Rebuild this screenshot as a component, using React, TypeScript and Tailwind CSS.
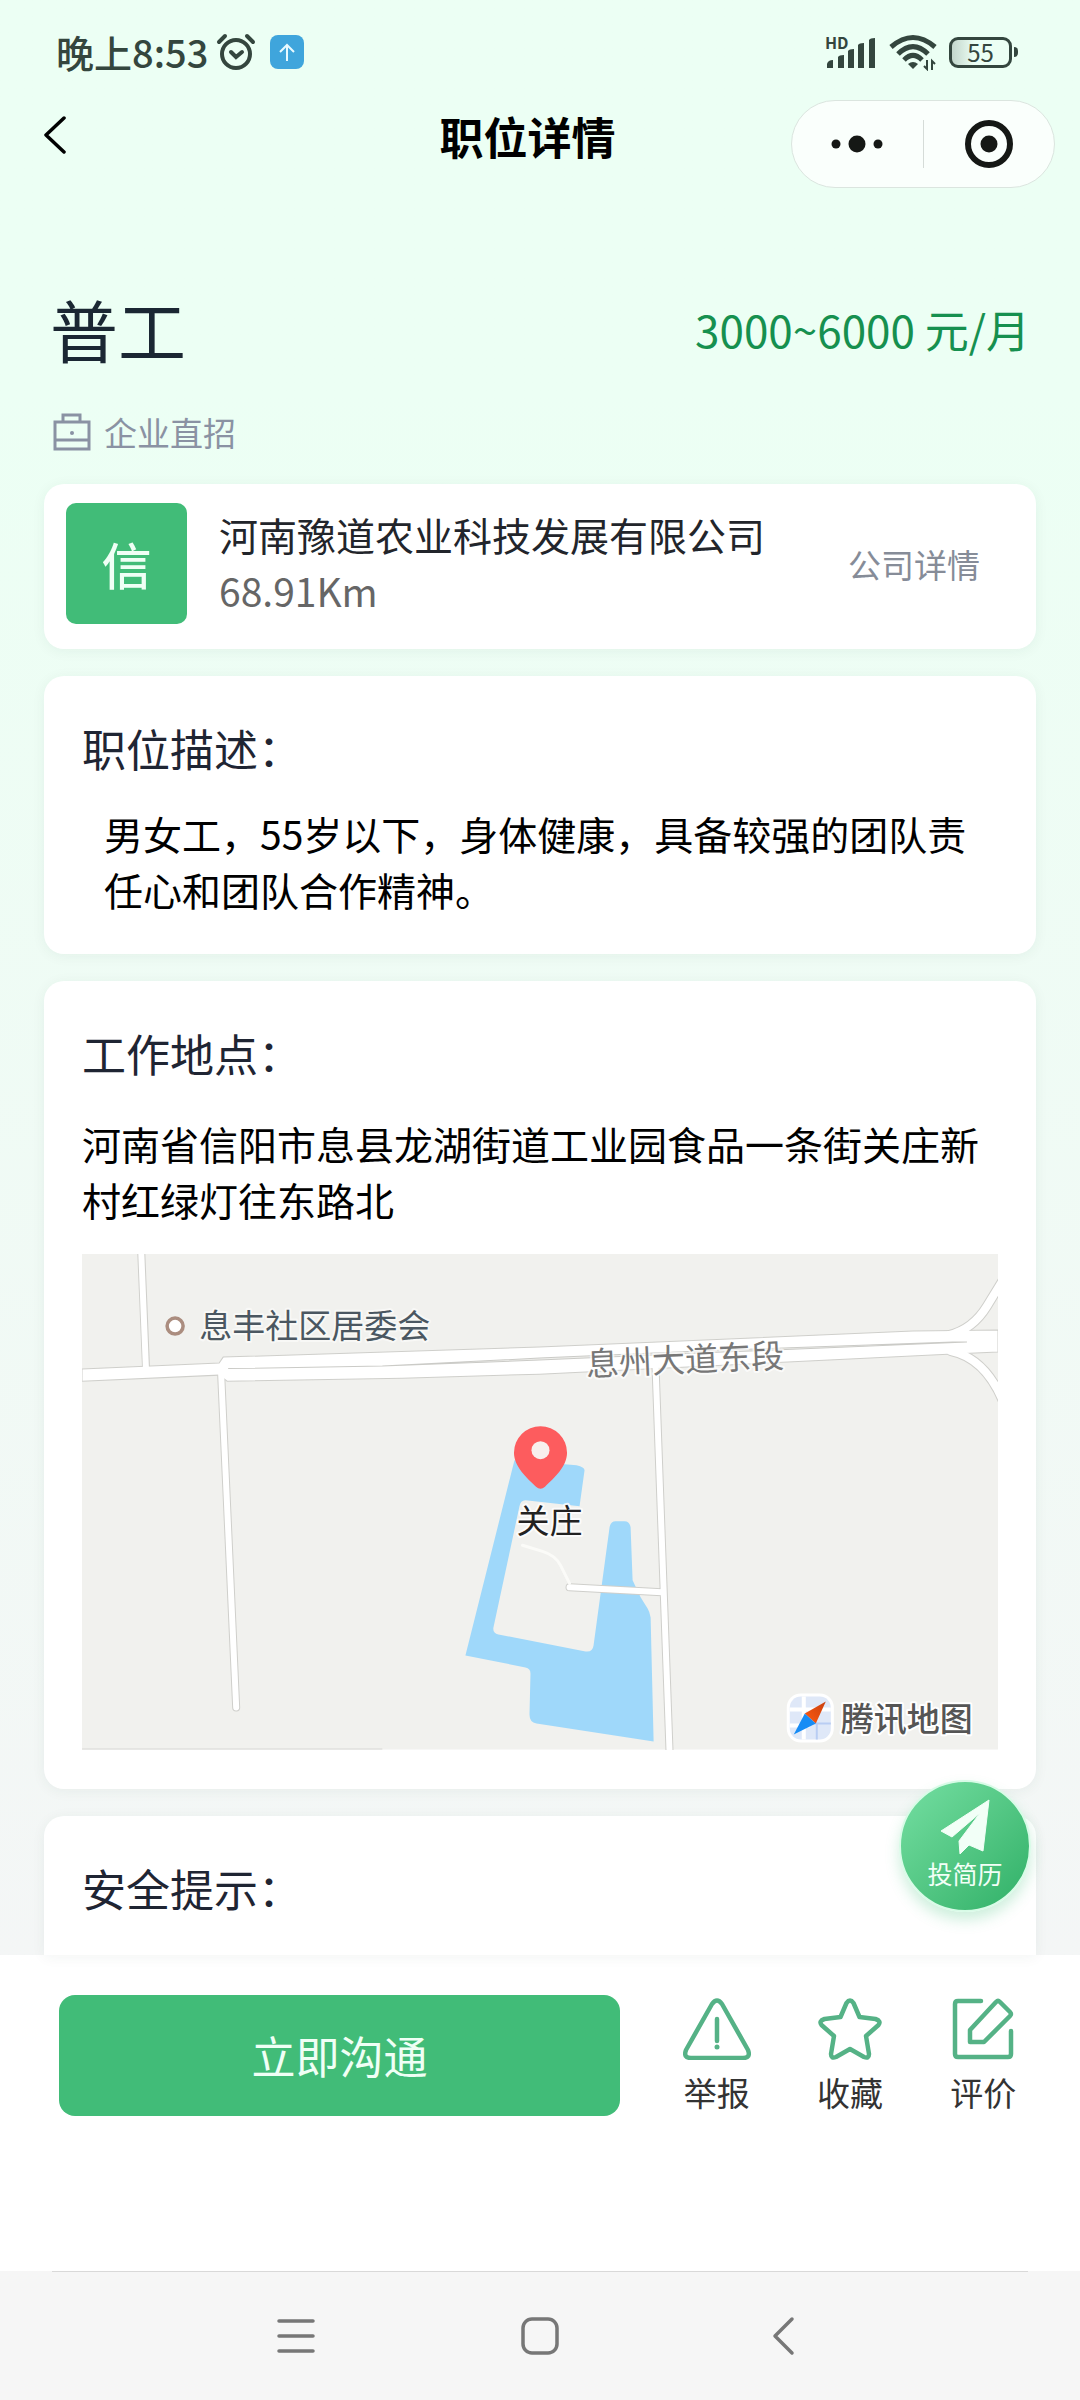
import type { ReactNode } from 'react';

const ADDRESS = '河南省信阳市息县龙湖街道工业园食品一条街关庄新村红绿灯往东路北';
const DESCRIPTION = '男女工，55岁以下，身体健康，具备较强的团队责任心和团队合作精神。';

function StatusBar() {
  return (
    <div className="flex h-10 items-center justify-between pr-[62px] pl-14 text-[#34463e]">
      <div className="flex items-center">
        <span className="text-[38px] leading-10 font-medium">晚上8:53</span>
        <svg className="ml-2 h-10 w-10" viewBox="0 0 40 40" fill="none" stroke="currentColor" strokeLinecap="round">
          <circle cx="20" cy="22" r="14" strokeWidth="4" />
          <path d="M3 10 9 4M37 10 31 4" strokeWidth="4" />
          <path d="m15 20 5 5 6-5" strokeWidth="4" />
        </svg>
        <span className="ml-3.5 flex h-[34px] w-[34px] items-center justify-center rounded-lg bg-[#3fa5dc]">
          <svg className="h-5 w-5" viewBox="0 0 20 20" fill="none" stroke="#e8faff" strokeWidth="2">
            <path d="M10 19V3M3 10l7-7 7 7" />
          </svg>
        </span>
      </div>

      <div className="flex items-center gap-3">
        <div className="relative">
          <span className="absolute top-0 left-0 text-[16px] leading-4 font-bold">HD</span>
          <svg className="h-9 w-[52px]" viewBox="0 0 52 36" fill="currentColor">
            <path d="M2 34v-4q1-4 6-4v8zM13 34V23q1-2 6-2v13zM23 34V17q1-2 6-2v19zM33 34V11q1-2 6-2v25zM44 34V6q1-2 6-2v30z" />
          </svg>
        </div>
        <svg className="h-[38px] w-12" viewBox="1 0 48 38" fill="none" stroke="currentColor" strokeWidth="5">
          <path d="M3 14Q25-5 47 14M10 21Q25 6 40 21M16 27Q25 18 34 27" />
          <path d="m20 31 5 5 5-5q-5-4-10 0Z" fill="currentColor" stroke="none" />
          <path d="M39 27v9l-3-3M44 37v-9l3 3" strokeWidth="2" />
        </svg>
        <div className="flex items-center gap-0.5">
          <span className="flex h-[31px] w-[63px] items-center justify-center rounded-[9px] border-3 border-current bg-linear-to-r from-[#c3d6cc] to-transparent to-40% text-[24px] leading-none">
            55
          </span>
          <span className="h-2.5 w-1 rounded-r-sm bg-current" />
        </div>
      </div>
    </div>
  );
}

function NavBar() {
  return (
    <header className="mt-7 grid grid-cols-[1fr_auto_1fr] items-start pr-[25px]">
      <button type="button" aria-label="返回" className="flex h-[70px] items-center pl-11">
        <svg className="h-[38px] w-[22px]" viewBox="0 0 22 38" fill="none" stroke="#000" strokeWidth="3.5" strokeLinecap="round" strokeLinejoin="round">
          <path d="M20 2 2 19l18 17" />
        </svg>
      </button>
      <h1 className="text-[44px] leading-[72px] font-bold text-black">职位详情</h1>
      <div className="flex h-[88px] w-[264px] items-center justify-self-end rounded-full border border-[#dbe5df] bg-white/75">
        <button type="button" aria-label="更多" className="flex flex-1 justify-center">
          <svg className="h-[18px] w-[52px]" viewBox="0 0 52 18" fill="#151815">
            <circle cx="5" cy="9" r="4.5" />
            <circle cx="26" cy="9" r="8.5" />
            <circle cx="47" cy="9" r="4.5" />
          </svg>
        </button>
        <span className="h-12 w-px bg-[#d5dcd8]" />
        <button type="button" aria-label="关闭" className="flex flex-1 justify-center">
          <svg className="h-12 w-12" viewBox="0 0 48 48">
            <circle cx="24" cy="24" r="21" fill="none" stroke="#151815" strokeWidth="6" />
            <circle cx="24" cy="24" r="8.5" fill="#151815" />
          </svg>
        </button>
      </div>
    </header>
  );
}

type SectionProps = {
  title: string;
  className: string;
  children?: ReactNode;
};

function Section({ title, className, children }: SectionProps) {
  return (
    <section className={`bg-white px-[38px] pt-[42px] shadow-[0_2px_14px_rgba(30,70,50,0.06)] ${className}`}>
      <h2 className="text-[44px] leading-[60px] text-[#1f2533]">{title}</h2>
      {children}
    </section>
  );
}

function LocationMap() {
  return (
    <svg className="mt-[27px] block w-full" viewBox="0 0 915 495" role="img" aria-label="工作地点地图">
      <defs>
        <linearGradient id="needleNorth" x1="1" y1="0" x2="0" y2="1">
          <stop offset="0" stopColor="#c9400f" />
          <stop offset="1" stopColor="#ff5a10" />
        </linearGradient>
      </defs>
      <rect width="915" height="495" fill="#f1f1ee" />
      <path d="M0 494.5H300" stroke="#d8d8d4" />

      {/* water */}
      <path
        d="M432 206 383 401 443 413Q448 414 448 419L447 460Q447 468 454 469L571 487 568 363Q567 357 565 354L558 343 550 326 548 273Q547 267 542 267H533Q528 267 527 273L511 391Q510 398 503 397L416 380Q410 379 411 373L437 252Q438 246 443 246L497 252 502 216Q502 213 494 211L482 210Z"
        fill="#9fd8fa"
      />

      {/* road casings first, then the white surface */}
      <g fill="none" strokeLinecap="round">
        <g stroke="#cfcfcb">
          <path d="M59 -6 64 115M139 120 154 453M573 115 587 500M487 333l92 5" strokeWidth="8" />
          <path d="M866 81Q890 75 904 52L920 26M868 97Q902 104 920 147" strokeWidth="10" />
        </g>
        <path d="M0 115 137 109l4-6L457 93 830 77l85-1V98L870 100 457 120 320 124 145 127l-8-6L0 127Z" fill="#fff" stroke="#cfcfcb" />
        <g stroke="#fff">
          <path d="M59 -6 64 118M139 120 154 453M573 115 587 500M487 333l92 5" strokeWidth="6" />
          <path d="M866 81Q890 75 904 52L920 26M868 97Q902 104 920 147" strokeWidth="8" />
          <path d="m440 291 20 6q13 4 18 14l9 18" strokeWidth="3" stroke="#fbfbf8" />
        </g>
      </g>
      <path d="M146 114.5 300 112 457 104 640 96 870 88h14L640 98 457 106 300 112Z" fill="#efefec" stroke="#cbcbc7" strokeWidth="1" />

      <circle cx="93" cy="72" r="8" fill="#fff" stroke="#ab8d7f" strokeWidth="3.5" />
      <g fontSize="33" stroke="#fff" strokeWidth="4" strokeLinejoin="round" paintOrder="stroke">
        <text x="117" y="84" fill="#4b5761" strokeOpacity="0.5">息丰社区居委会</text>
        <text x="504" y="122" fill="#777" strokeOpacity="0.7" transform="rotate(-2.5 504 122)">息州大道东段</text>
        <text x="434" y="279" fill="#222" strokeOpacity="0.8">关庄</text>
        <text x="758" y="476" fill="#555" fontWeight="500">腾讯地图</text>
      </g>

      <path
        d="M458 172a26.5 26.5 0 0 0-26.5 26.5c0 14 13 25 22 34q4.5 4 9 0c9-9 22-20 22-34A26.5 26.5 0 0 0 458 172Z"
        fill="#fd5c5e"
      />
      <circle cx="458" cy="196" r="9" fill="#f8efed" />

      {/* map provider logo */}
      <rect x="704" y="439" width="47" height="49" rx="14" fill="#fff" />
      <rect x="707" y="442" width="41" height="43" rx="11" fill="#dfe8f8" />
      <path d="M707 455h41M721 442v43M707 471h20" stroke="#fff" strokeWidth="4" />
      <path d="M727 469h21M734 469v16" stroke="#b9cdf3" strokeWidth="2" />
      <path d="M743 447 722 459 733 469Z" fill="url(#needleNorth)" />
      <path d="M711 480 722 459 733 469Z" fill="#178cf5" />
    </svg>
  );
}

function ActionButton({ label, children }: { label: string; children: ReactNode }) {
  return (
    <button type="button" className="flex flex-1 flex-col items-center gap-3">
      <svg className="h-[62px] w-[68px]" viewBox="0 0 68 62" fill="none" stroke="#55b286" strokeWidth="4.5" strokeLinecap="round" strokeLinejoin="round">
        {children}
      </svg>
      <span className="text-[33px] leading-10 text-[#333]">{label}</span>
    </button>
  );
}

function BottomBar() {
  return (
    <div className="flex items-center bg-white pt-10 pr-[30px] pb-[155px] pl-[59px]">
      <button type="button" className="h-[121px] w-[561px] rounded-2xl bg-[#41bc78] text-[44px] text-[#effff5]">
        立即沟通
      </button>
      <div className="ml-[30px] flex flex-1">
        <ActionButton label="举报">
          <path d="M29 6q5-7 10 0l26 46q3 8-5 8H8q-8 0-5-8ZM34 21v22" />
          <path d="M34 49v.1" strokeWidth="5" />
        </ActionButton>
        <ActionButton label="收藏">
          <path d="M30.5 5q3.5-5 7 0l6 14 16 2q6 2 3 6L50 38l3 18q0 5-5 3l-14-8-14 8q-5 2-5-3l3-18L5.500 27q-3-4 3-6l16-2Z" />
        </ActionButton>
        <ActionButton label="评价">
          <path d="M32 3H9Q6 3 6 6v50q0 3 3 3h50q3 0 3-3V33" />
          <path d="M21 32 47 4q2-2 4 0l10 10q2 2 0 4L35 44H21Z" />
        </ActionButton>
      </div>
    </div>
  );
}

function SystemNav() {
  return (
    <nav className="bg-[#f6f6f6]">
      <div className="mx-[52px] h-px bg-[#d9d9d9]" />
      <div className="flex h-[129px] items-center justify-center gap-[204px]">
        <button type="button" aria-label="最近任务">
          <svg className="h-10 w-10" viewBox="0 0 40 40" stroke="#777" strokeWidth="3.5" strokeLinecap="round">
            <path d="M3 5h34M3 20h34M3 35h34" />
          </svg>
        </button>
        <button type="button" aria-label="主屏幕">
          <svg className="h-10 w-10" viewBox="0 0 40 40" fill="none" stroke="#777" strokeWidth="3.5">
            <rect x="3" y="3" width="34" height="34" rx="9" />
          </svg>
        </button>
        <button type="button" aria-label="返回上一页">
          <svg className="h-10 w-10" viewBox="0 0 40 40" fill="none" stroke="#777" strokeWidth="3.5" strokeLinecap="round" strokeLinejoin="round">
            <path d="M28 3 11 20l17 17" />
          </svg>
        </button>
      </div>
    </nav>
  );
}

export default function App() {
  return (
    <div lang="zh-CN" className="flex min-h-screen flex-col bg-white font-['Noto_Sans_CJK_SC',sans-serif]">
      <div className="relative flex-1 bg-linear-to-b from-[#ecfff4] from-20% to-[#f4f6f6] pt-8">
        <StatusBar />
        <NavBar />

        <main className="px-11 pt-[101px]">
          <div className="flex items-center justify-between pr-1.5 pl-1.5">
            <h2 className="text-[68px] leading-20 text-[#1b2733]">普工</h2>
            <p className="text-[44px] leading-[60px] text-[#16904f]">3000~6000 元/月</p>
          </div>
          <div className="mt-[43px] flex items-center gap-3 pl-2 text-[#8a92a3]">
            <svg className="h-[38px] w-10" viewBox="0 0 40 38" fill="none" stroke="currentColor" strokeWidth="3">
              <path d="M3 9h34v27H3ZM11 9V2h17v7M3 27h34" />
              <circle cx="20" cy="20" r="2" fill="currentColor" stroke="none" />
            </svg>
            <span className="text-[33px] leading-10">企业直招</span>
          </div>

          <div className="mt-8 flex flex-col gap-[27px]">
            <section className="flex items-center rounded-[20px] bg-white pt-[19px] pr-14 pb-[25px] pl-[22px] shadow-[0_2px_14px_rgba(30,70,50,0.06)]">
              <div className="flex h-[121px] w-[121px] shrink-0 items-center justify-center rounded-[10px] bg-[#41bc78] text-[50px] font-medium text-[#effff5]">
                信
              </div>
              <div className="ml-8 flex-1 pb-1 text-[39px] leading-14">
                <p className="text-[#22252b]">河南豫道农业科技发展有限公司</p>
                <p className="text-[#666]">68.91Km</p>
              </div>
              <a href="#company" className="text-[33px] leading-10 text-[#868c98]">公司详情</a>
            </section>

            <Section title="职位描述：" className="rounded-[20px] pb-[37px]">
              <p className="mt-[27px] px-[22px] text-[39px] leading-14 text-black">{DESCRIPTION}</p>
            </Section>

            <Section title="工作地点：" className="rounded-[20px] pb-[39px]">
              <p className="mt-8 text-[39px] leading-14 text-black">{ADDRESS}</p>
              <LocationMap />
            </Section>

            <Section title="安全提示：" className="rounded-t-[20px] pb-[37px]" />
          </div>
        </main>

        <button
          type="button"
          aria-label="投简历"
          className="absolute right-[49px] bottom-[43px] flex h-[132px] w-[132px] flex-col items-center rounded-full border-2 border-[#d8fbe7] bg-linear-to-br from-[#74dfa2] to-[#2db067] pt-[17px] text-[#f2fff7] shadow-[0_8px_14px_rgba(60,190,120,0.25)]"
        >
          <svg className="h-14 w-[50px]" viewBox="0 0 50 56" fill="currentColor" stroke="currentColor" strokeWidth="1" strokeLinejoin="round">
            <path d="M49 1 43 52 29 46 20 55 19 42 40 14 12 38 1 32Z" />
          </svg>
          <span className="mt-0.5 text-[25px] leading-8">投简历</span>
        </button>
      </div>

      <BottomBar />
      <SystemNav />
    </div>
  );
}
